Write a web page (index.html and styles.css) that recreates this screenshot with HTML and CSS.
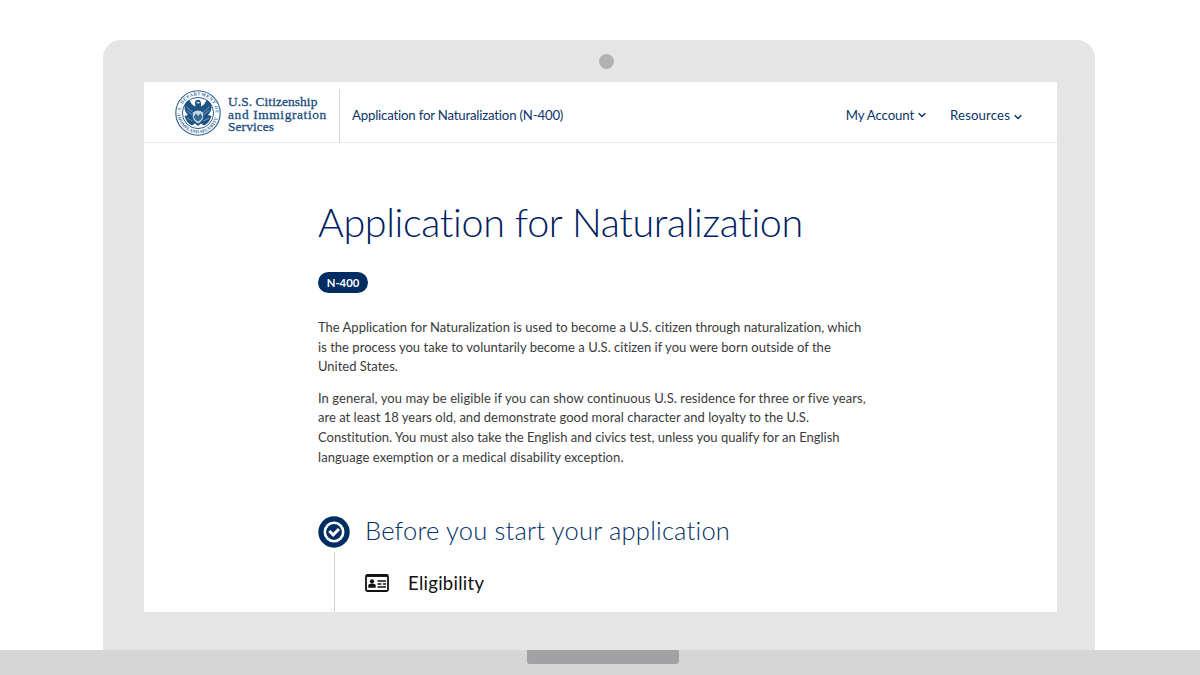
FILE: index.html
```html
<!DOCTYPE html>
<html lang="en">
<head>
<meta charset="utf-8">
<title>Application for Naturalization</title>
<link rel="stylesheet" href="styles.css">
</head>
<body>
<div class="laptop">
  <div class="camera"></div>
  <div class="screen">
    <header class="header">
      <div class="brand">
        <svg class="seal" viewBox="0 0 46 46" aria-hidden="true">
          <defs>
            <path id="arc-top" d="M5.630 26.060A17.640 17.640 0 1 1 40.370 26.060"/>
            <path id="arc-bottom" d="M3.200 27.400A20.300 20.300 0 0 0 42.800 27.400"/>
          </defs>
          <circle cx="23" cy="23" r="22.2" fill="#fff" stroke="#2d6293" stroke-width="1.1"/>
          <circle cx="23" cy="23" r="15.6" fill="#fff" stroke="#2d6293" stroke-width="1"/>
          <text class="seal-text"><textPath href="#arc-top" textLength="58">U.S. DEPARTMENT OF</textPath></text>
          <text class="seal-text"><textPath href="#arc-bottom" textLength="54">HOMELAND SECURITY</textPath></text>
          <path fill="#1d5285" d="M9.500 15Q11 11 14.500 10Q16.500 15 20.300 16.500L20 12.500Q20.500 9.500 23.500 9.700Q26.500 10 26 16.500Q29.500 15 31.500 10Q35 11 36.500 15Q37 21 33 25L36.500 26Q34.500 33 29 35.500L26 33.500L23 36L20 33.500L17 35.500Q11.500 33 9.500 26L13 25Q9 21 9.500 15Z"/>
          <path fill="#dce7f0" d="M21 12H25L23.500 14Z"/>
          <path fill="#c3d4e3" d="M17.800 22.500Q23 18.500 28.200 22.500V27.500Q27 31.500 23 33.500Q19 31.500 17.800 27.500Z"/>
          <path fill="#356894" d="M18.500 27L21 23.500L23 26L25.500 23.500L27.500 27L25.500 30L23 31.500L20.500 30Z"/>
          <path fill="none" stroke="#9fb9d1" stroke-width=".7" d="M11.500 17L17.500 22M34.500 17L28.500 22M12 20.500L17 24.500M34 20.500L29 24.500M12 28L17.500 31M34 28L28.500 31"/>
        </svg>
        <div class="brand-name"><span class="b1">U.S. Citizenship</span><span class="b2">and Immigration</span><span class="b3">Services</span></div>
      </div>
      <div class="form-name">Application for Naturalization (N-400)</div>
      <nav class="nav">
        <a class="nav-item account"><span>My Account</span><svg class="chevron" viewBox="0 0 8 6"><path d="M.7 1.200L4 4.500L7.300 1.200"/></svg></a>
        <a class="nav-item resources"><span>Resources</span><svg class="chevron low" viewBox="0 0 8 6"><path d="M.7 1.200L4 4.500L7.300 1.200"/></svg></a>
      </nav>
    </header>
    <main class="content">
      <h1 class="title">Application for Naturalization</h1>
      <div class="badge">N-400</div>
      <p class="para">
        <span class="line l1">The Application for Naturalization is used to become a U.S. citizen through naturalization, which</span>
        <span class="line l2">is the process you take to voluntarily become a U.S. citizen if you were born outside of the</span>
        <span class="line l3">United States.</span>
      </p>
      <p class="para">
        <span class="line l4">In general, you may be eligible if you can show continuous U.S. residence for three or five years,</span>
        <span class="line l5">are at least 18 years old, and demonstrate good moral character and loyalty to the U.S.</span>
        <span class="line l6">Constitution. You must also take the English and civics test, unless you qualify for an English</span>
        <span class="line l7">language exemption or a medical disability exception.</span>
      </p>
      <section class="step">
        <div class="rail">
          <svg class="step-icon" viewBox="0 0 32 32"><circle cx="16" cy="16" r="15.700" fill="#002d62"/><circle cx="16" cy="16" r="9.200" fill="none" stroke="#fff" stroke-width="2.600"/><path d="M11.300 15L15.200 18.800L21 13" fill="none" stroke="#fff" stroke-width="3"/></svg>
          <div class="rail-line"></div>
        </div>
        <div class="step-body">
          <h2 class="step-title">Before you start your application</h2>
          <div class="item">
            <svg class="card-icon" viewBox="0 0 24 18"><rect x="1" y="1" width="22" height="16" rx="1.500" fill="#fff" stroke="#111" stroke-width="1.800"/><path d="M1 2.200H23" stroke="#111" stroke-width="1.500"/><circle cx="7" cy="7.300" r="2.100" fill="#111"/><path fill="#111" d="M3.300 13.700V11.500Q3.300 9.400 7 9.400T10.700 11.500V13.700Z"/><path d="M12.500 7H21M12.500 10H16.500M18 10H21M12.500 13H21" stroke="#111" stroke-width="1.300"/></svg>
            <span class="item-name">Eligibility</span>
          </div>
        </div>
      </section>
    </main>
  </div>
</div>
<div class="base"><div class="notch"></div></div>
</body>
</html>
```
FILE: styles.css
```css
* { box-sizing: border-box; }
body { margin: 0; width: 1200px; height: 675px; overflow: hidden; background: #fff; color: #3a3a3a; font-family: Lato, "Liberation Sans", sans-serif; font-variant-ligatures: none; padding-top: 40px; }
.laptop { width: 992px; height: 610px; margin-left: 103px; background: #e5e5e5; border-radius: 18px 18px 0 0; padding: 14px 38px 38px 41px; }
.camera { width: 15px; height: 15px; border-radius: 50%; background: #b1b1b1; margin-left: 455px; }
.screen { width: 913px; height: 530px; margin-top: 13px; background: #fff; overflow: hidden; }
.header { height: 61px; border-bottom: 1px solid #e9e9e9; display: flex; color: #0b3467; }
.brand { width: 196px; height: 53px; margin-top: 7px; padding: 1px 0 0 31px; border-right: 1px solid #d5d5d5; display: flex; gap: 7px; }
.seal { width: 46px; height: 46px; flex: none; }
.seal-text { font: 700 4.6px "Liberation Serif", serif; fill: #2d6293; }
.brand-name { display: flex; flex-direction: column; padding-top: 6px; color: #1b4d80; font: 13.4px/12.7px "Liberation Serif", serif; white-space: nowrap; -webkit-text-stroke: .3px #1b4d80; }
.b1 { letter-spacing: .08px; }
.b2 { letter-spacing: .62px; }
.b3 { letter-spacing: .1px; }
.form-name { padding: 25px 0 0 12px; font-size: 13.2px; line-height: 16px; letter-spacing: -.18px; white-space: nowrap; }
.nav { display: flex; align-items: flex-start; gap: 24px; margin-left: auto; padding: 25px 35px 0 0; font-size: 13.2px; line-height: 16px; }
.nav-item { display: flex; align-items: center; gap: 4px; white-space: nowrap; }
.account { letter-spacing: -.1px; }
.resources { letter-spacing: .13px; }
.chevron { width: 8px; height: 6px; fill: none; stroke: #0b3467; stroke-width: 1.4; }
.low { margin-top: 3px; }
.content { padding: 56px 0 0 174px; white-space: nowrap; }
.title { margin: 0; color: #002060; font-size: 39.5px; line-height: 46px; font-weight: 300; letter-spacing: -.36px; }
.badge { width: 50px; height: 21px; margin: 27px 0 25px; border-radius: 11px; background: #002d62; color: #fff; font-size: 11.3px; font-weight: 700; line-height: 21px; text-align: center; }
.para { margin: 0 0 12px; font-size: 13px; line-height: 19.6px; }
.line { display: block; width: max-content; }
.l2 { letter-spacing: .025px; }
.l4 { letter-spacing: .07px; }
.l5, .l6 { letter-spacing: .012px; }
.l7 { letter-spacing: .075px; }
.step { display: flex; gap: 15px; margin-top: 49px; height: 96px; }
.rail { width: 32px; display: flex; flex-direction: column; }
.step-icon { width: 32px; height: 32px; flex: none; }
.rail-line { width: 1px; flex: 1; margin: 4px 0 0 16px; background: #d2d2d2; }
.step-title { margin: -2px 0 0; color: #003066; font-size: 25.5px; line-height: 32px; font-weight: 300; letter-spacing: .22px; }
.item { display: flex; align-items: center; gap: 19px; margin-top: 26px; color: #111; }
.card-icon { width: 24px; height: 18px; }
.item-name { font-size: 18.5px; line-height: 22px; letter-spacing: .28px; }
.base { height: 25px; background: #d6d6d6; display: flex; padding-left: 527px; }
.notch { width: 152px; height: 14px; background: #a2a2a4; border-radius: 0 0 3px 3px; }
```
